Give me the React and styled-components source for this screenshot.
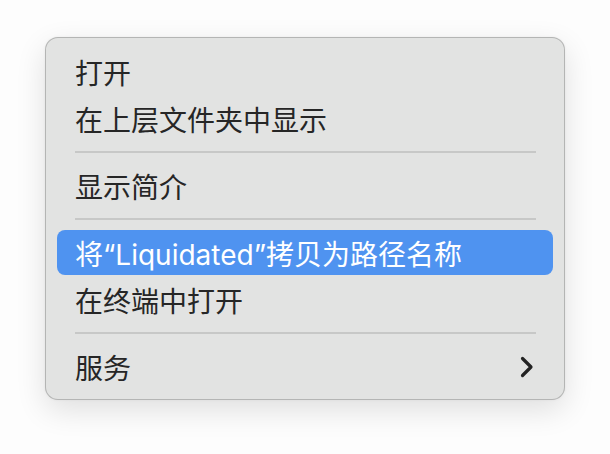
import React from 'react';
import styled, { createGlobalStyle } from 'styled-components';

const Global = createGlobalStyle`
  html, body {
    margin: 0;
    padding: 0;
    background: #fdfdfd;
  }
`;

const Page = styled.div`
  width: 610px;
  height: 454px;
  box-sizing: border-box;
  padding: 37px 0 0 45px;
`;

const Menu = styled.div`
  width: 520px;
  box-sizing: border-box;
  padding: 10px 11px 9px;
  background: #e2e3e2;
  border: 1px solid rgba(0, 0, 0, 0.2);
  border-radius: 13px;
  box-shadow: 0 10px 30px rgba(0, 0, 0, 0.12), 0 0 3px rgba(0, 0, 0, 0.05);
  font-family: Inter, "Noto Sans CJK SC", sans-serif;
`;

const Row = styled.div`
  height: ${(p) => (p.$active ? 45 : 47)}px;
  margin: ${(p) => (p.$active ? '1px 0' : '0')};
  display: flex;
  align-items: center;
  justify-content: space-between;
  padding: 0 19px 0 18px;
  border-radius: 8px;
  font-size: 28px;
  color: ${(p) => (p.$active ? '#ffffff' : '#262626')};
  background: ${(p) => (p.$active ? '#4f93f0' : 'transparent')};
`;

const Separator = styled.div`
  height: 20px;
  display: flex;
  align-items: center;
  padding: 0 17px 0 18px;

  &::after {
    content: '';
    flex: 1;
    height: 2px;
    background: #c7c8c7;
  }
`;

const Chevron = () => (
  <svg width="14" height="22" viewBox="0 0 14 22">
    <path
      d="M2.5 2.5 L11 11 L2.5 19.5"
      fill="none"
      stroke="#232323"
      strokeWidth="3.2"
      strokeLinecap="round"
      strokeLinejoin="round"
    />
  </svg>
);

const items = [
  { label: '打开' },
  { label: '在上层文件夹中显示' },
  { sep: true },
  { label: '显示简介' },
  { sep: true },
  { label: '将“Liquidated”拷贝为路径名称', active: true },
  { label: '在终端中打开' },
  { sep: true },
  { label: '服务', sub: true },
];

export default function App() {
  return (
    <Page>
      <Global />
      <Menu>
        {items.map((it, i) =>
          it.sep ? (
            <Separator key={i} />
          ) : (
            <Row key={i} $active={it.active}>
              <span>{it.label}</span>
              {it.sub && <Chevron />}
            </Row>
          )
        )}
      </Menu>
    </Page>
  );
}
